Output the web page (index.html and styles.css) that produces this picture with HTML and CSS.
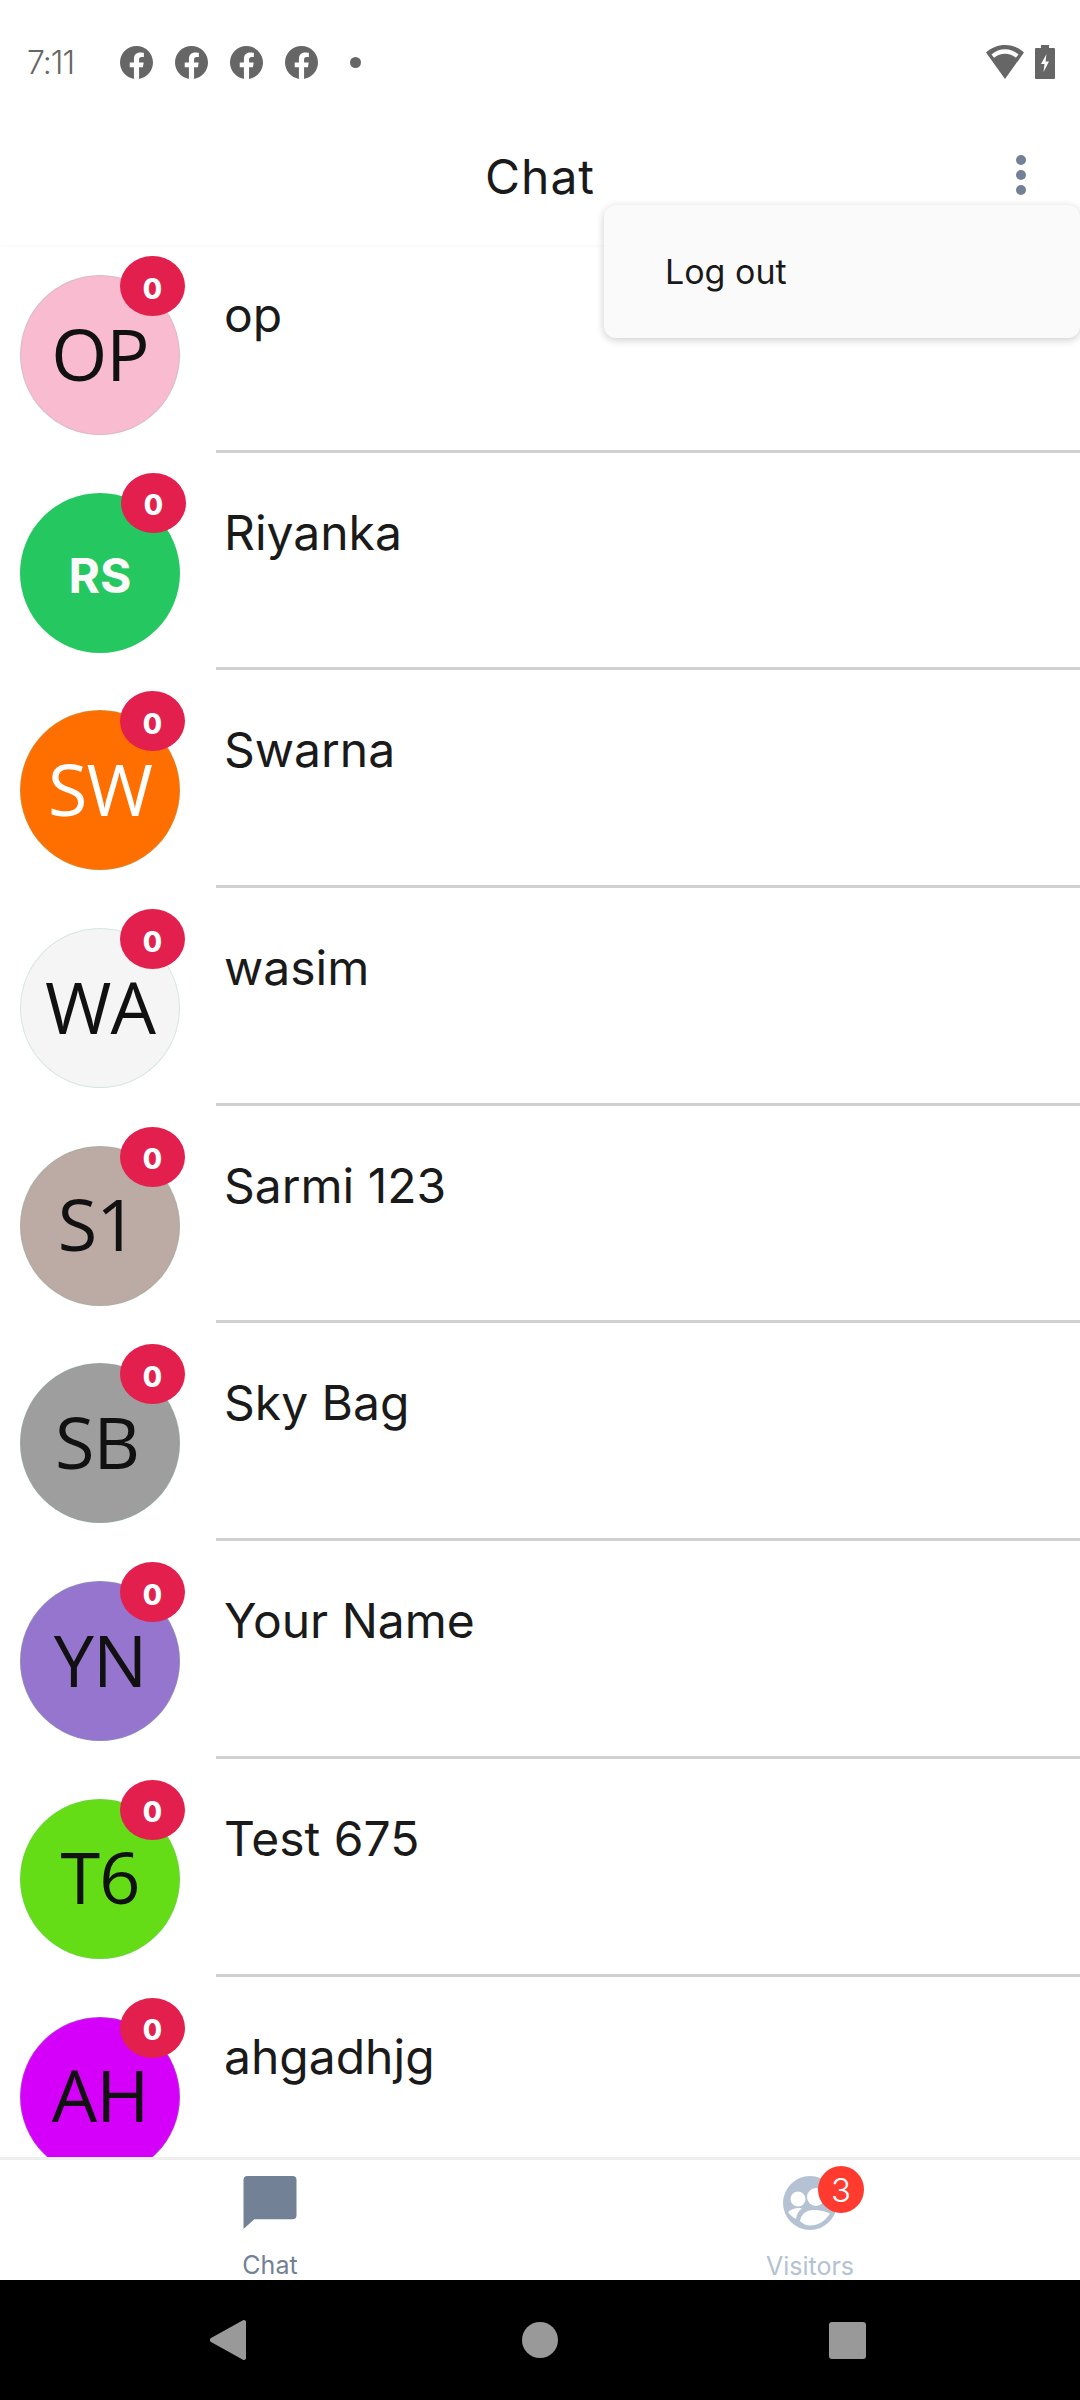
FILE: index.html
```html
<!DOCTYPE html>
<html lang="en">
<head>
<meta charset="utf-8">
<title>Chat</title>
<link rel="stylesheet" href="styles.css">
</head>
<body>
<svg class="defs" width="0" height="0" aria-hidden="true">
  <symbol id="fb" viewBox="0 0 24 24"><path d="M24 12.073c0-6.627-5.373-12-12-12s-12 5.373-12 12c0 5.99 4.388 10.954 10.125 11.854v-8.385H7.078v-3.47h3.047V9.43c0-3.007 1.792-4.669 4.533-4.669 1.312 0 2.686.235 2.686.235v2.953H15.83c-1.491 0-1.956.925-1.956 1.874v2.25h3.328l-.532 3.47h-2.796v8.385C19.612 23.027 24 18.062 24 12.073z"/></symbol>
</svg>
<div class="app">
  <div class="status">
    <span class="time">7:11</span>
    <div class="notifs">
      <svg class="fb"><use href="#fb"/></svg>
      <svg class="fb"><use href="#fb"/></svg>
      <svg class="fb"><use href="#fb"/></svg>
      <svg class="fb"><use href="#fb"/></svg>
      <span class="dot"></span>
    </div>
    <div class="sys">
      <svg class="wifi" viewBox="0 0 38 34"><path d="M19 0C12 0 5.500 2.600 0 7.500L19 34 38 7.500C32.500 2.600 26 0 19 0z" fill="#666"/><path d="M5.500 9.500C9.500 6 14 4.200 19 4.200s9.500 1.800 13.500 5.300l-2.600 3.200C26.800 10.200 23 8.800 19 8.800s-7.800 1.400-10.900 3.900z" fill="#fff"/></svg>
      <svg class="batt" viewBox="0 0 20 34"><path d="M6 0h8v3h5a1 1 0 0 1 1 1v29a1 1 0 0 1-1 1H1a1 1 0 0 1-1-1V4a1 1 0 0 1 1-1h5z" fill="#666"/><path d="M11.500 9 6 19h3.500L8.500 27 14 16.500h-3.500z" fill="#fff"/></svg>
    </div>
  </div>
  <header class="header">
    <span></span>
    <h1 class="title">Chat</h1>
    <div class="more"><i></i><i></i><i></i></div>
  </header>
  <div class="menu">Log out</div>
  <main class="list">
    <div class="row"><div class="avatar pic pink"><span class="initials">OP</span><span class="badge">0</span></div><div class="body">op</div></div>
    <div class="row"><div class="avatar green"><span>RS</span><span class="badge">0</span></div><div class="body">Riyanka</div></div>
    <div class="row"><div class="avatar pic orange"><span class="initials">SW</span><span class="badge">0</span></div><div class="body">Swarna</div></div>
    <div class="row"><div class="avatar pic pale"><span class="initials">WA</span><span class="badge">0</span></div><div class="body">wasim</div></div>
    <div class="row"><div class="avatar pic taupe"><span class="initials shift">S1</span><span class="badge">0</span></div><div class="body">Sarmi 123</div></div>
    <div class="row"><div class="avatar pic grey"><span class="initials shift">SB</span><span class="badge">0</span></div><div class="body">Sky Bag</div></div>
    <div class="row"><div class="avatar pic purple"><span class="initials">YN</span><span class="badge">0</span></div><div class="body">Your Name</div></div>
    <div class="row"><div class="avatar pic lime"><span class="initials">T6</span><span class="badge">0</span></div><div class="body">Test 675</div></div>
    <div class="row"><div class="avatar pic magenta"><span class="initials">AH</span><span class="badge">0</span></div><div class="body">ahgadhjg</div></div>
  </main>
  <nav class="tabs">
    <div class="tab active">
      <svg class="tabicon" viewBox="0 0 54 54"><path d="M4 0h46a4 4 0 0 1 4 4v36a4 4 0 0 1-4 4H11L0 54V4a4 4 0 0 1 4-4z" fill="#728196"/></svg>
      <span class="label">Chat</span>
    </div>
    <div class="tab inactive">
      <div class="iconwrap">
        <svg class="tabicon" viewBox="0 0 54 54"><circle cx="27" cy="27" r="27" fill="#b4c2d3"/><circle cx="15" cy="23" r="7.500" fill="#fff"/><circle cx="33" cy="21" r="9" fill="#fff"/><path d="M5 36c4-3.500 9-4.600 14-3.800-3.500 2.600-5.500 6.200-6 10.800C9.800 41.400 7 39 5 36z" fill="#fff"/><path d="M17 45c1-6.500 6-11 14-11 6 0 11 1.300 16 3.600C42 45.500 35 49.500 27 49.500c-3.500 0-7-1.500-10-4.500z" fill="#fff"/></svg>
        <span class="count">3</span>
      </div>
      <span class="label">Visitors</span>
    </div>
  </nav>
  <div class="navbar">
    <svg class="back" viewBox="0 0 36 40"><path d="M34 0a2 2 0 0 1 2 2v36a2 2 0 0 1-3 1.700L1 22a2.400 2.400 0 0 1 0-4L33 .3z" fill="#999"/></svg>
    <span class="home"></span>
    <span class="recent"></span>
  </div>
</div>
</body>
</html>
```

FILE: styles.css
```css
* { box-sizing: border-box; }
html, body { margin: 0; padding: 0; }
body { background: #fff; font-family: "Inter", "Liberation Sans", sans-serif; color: #1a1a1a; }
.defs { position: absolute; }
.app { position: relative; width: 1080px; height: 2400px; display: flex; flex-direction: column; overflow: hidden; }

.status { height: 124px; display: flex; align-items: center; padding: 0 25px 0 27px; color: #666; flex: none; }
.time { font-size: 32px; width: 93px; letter-spacing: -1px; font-weight: 300; }
.notifs { display: flex; align-items: center; gap: 22px; flex: 1; }
.fb { width: 33px; height: 33px; fill: #666; }
.dot { width: 11px; height: 11px; border-radius: 50%; background: #666; margin-left: 10px; }
.sys { display: flex; align-items: center; gap: 11px; }
.wifi { width: 38px; height: 34px; }
.batt { width: 20px; height: 34px; }

.header { height: 121px; flex: none; display: grid; grid-template-columns: 1fr auto 1fr; align-items: center; padding-bottom: 15px; position: relative; z-index: 1; background: #fff; box-shadow: 0 2px 3px rgba(0,0,0,.02); }
.title { margin: 0; font-size: 48px; font-weight: 400; line-height: 1; letter-spacing: 1px; }
.more { justify-self: end; margin-right: 54px; margin-bottom: 5px; display: flex; flex-direction: column; gap: 5px; }
.more i { width: 10px; height: 10px; border-radius: 50%; background: #728196; }

.menu { position: absolute; z-index: 3; top: 205px; right: 0; width: 476px; height: 133px; padding: 0 0 0 61px; display: flex; align-items: center; background: #fafafa; border-radius: 12px; font-size: 34px; box-shadow: 0 2px 8px rgba(0,0,0,.2); }

.list { flex: 1; min-height: 0; overflow: hidden; display: flex; flex-direction: column; gap: 40px; padding-top: 30px; }
.row { flex: none; height: 177.7px; display: flex; }
.avatar { position: relative; flex: none; width: 160px; height: 160px; margin-left: 20px; border-radius: 50%; display: flex; align-items: center; justify-content: center; font-size: 48px; font-weight: 700; color: #fafafa; padding-top: 6px; }
.pic { font-family: "Open Sans", sans-serif; font-weight: 400; font-size: 72px; color: #111; border: 1px solid rgba(120,190,150,.25); padding: 0 0 5px; }
.initials { filter: blur(.6px); letter-spacing: -1px; }
.shift { margin-left: -6px; }
.pink { background: #f8bbd0; }
.green { background: #25c860; }
.orange { background: #ff6f00; color: #fff; }
.pale { background: #f5f5f5; }
.taupe { background: #bcaaa4; }
.grey { background: #9e9e9e; }
.purple { background: #9575cd; }
.lime { background: #64dd17; }
.magenta { background: #d500f9; }
.badge { position: absolute; top: -20px; right: -6px; width: 65px; height: 60px; border-radius: 50%; background: #e31f4d; color: #fff; font-family: "Inter", sans-serif; font-size: 28px; font-weight: 800; letter-spacing: 0; display: flex; align-items: center; justify-content: center; padding-top: 5px; }
.body { flex: 1; margin-left: 36px; padding: 11px 0 0 8px; border-bottom: 3px solid #d0d0d0; font-size: 48px; line-height: 58px; }

.tabs { height: 123px; flex: none; display: flex; border-top: 3px solid #eee; background: #fff; position: relative; z-index: 1; overflow: hidden; }
.tab { flex: 1; display: flex; flex-direction: column; align-items: center; padding-top: 16px; }
.tabicon { width: 54px; height: 54px; display: block; }
.iconwrap { position: relative; }
.count { position: absolute; top: -10px; right: -27px; width: 46px; height: 47px; border-radius: 50%; background: #ff3b30; color: #fff; font-size: 33px; font-weight: 300; display: flex; align-items: center; justify-content: center; }
.label { margin-top: 21px; font-size: 25px; line-height: 30px; }
.active .label { color: #728196; }
.inactive .label { color: #b4c2d3; }

.navbar { height: 120px; flex: none; background: #000; display: flex; align-items: center; justify-content: space-between; padding: 0 214px 0 210px; }
.back { width: 36px; height: 40px; }
.home { width: 36px; height: 36px; border-radius: 50%; background: #999; margin-left: 4px; }
.recent { width: 37px; height: 37px; border-radius: 3px; background: #999; }
```
